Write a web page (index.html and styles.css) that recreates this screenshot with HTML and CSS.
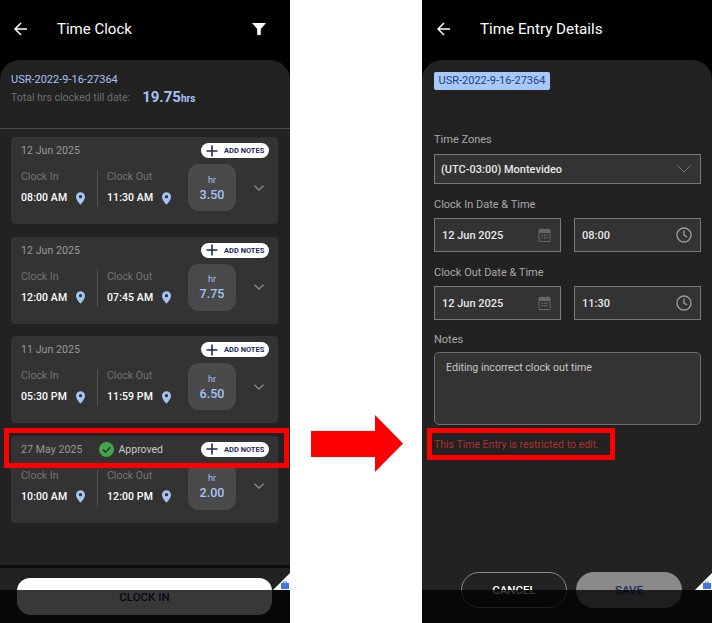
FILE: index.html
```html
<!DOCTYPE html>
<html lang="en">
<head>
    <meta charset="UTF-8">
    <meta name="viewport" content="width=device-width, initial-scale=1.0">
    <title>Time Clock</title>
    <link rel="stylesheet" href="styles.css">
</head>
<body>
    <svg width="0" height="0" class="defs">
        <symbol id="pin" viewBox="0 0 10 14"><path fill="#a4c4f4" fill-rule="evenodd" d="M5 0a5 5 0 0 1 5 5c0 3.400-3.400 6.800-5 9-1.600-2.200-5-5.600-5-9a5 5 0 0 1 5-5zm0 3.200a1.800 1.800 0 1 0 0 3.600 1.800 1.800 0 0 0 0-3.600z"/></symbol>
        <symbol id="chev" viewBox="0 0 10 6"><path fill="none" stroke="#8a8a8a" stroke-width="1.300" d="M.5.700 5 5l4.500-4.300"/></symbol>
        <symbol id="plus" viewBox="0 0 12 12"><path stroke="#1b2a5c" stroke-width="1.600" d="M6 .5v11M.5 6h11"/></symbol>
        <symbol id="cal" viewBox="0 0 14 14"><path fill="#666" fill-rule="evenodd" d="M2 1h2V0h1v1h4V0h1v1h2a1 1 0 0 1 1 1v11a1 1 0 0 1-1 1H2a1 1 0 0 1-1-1V2a1 1 0 0 1 1-1zm0 4v8h10V5zm2 1.500h1.500V8H4zm2.300 0h1.500V8H6.300zm2.300 0H10V8H8.600zM4 9h1.500v1.500H4zm2.300 0h1.500v1.500H6.300zm2.300 0H10v1.500H8.600z" transform="translate(-.5)"/></symbol>
        <symbol id="clock" viewBox="0 0 16 16"><circle cx="8" cy="8" r="7" fill="none" stroke="#9a9a9a" stroke-width="1.400"/><path fill="none" stroke="#9a9a9a" stroke-width="1.400" d="M8 3.500V8l3.200 2"/></symbol>
        <symbol id="case" viewBox="0 0 8 8"><path fill="#3f78e0" d="M0 2h2.200V.5h3.600V2H8v6H0zM3 2h2V1.200H3z"/></symbol>
    </svg>

    <!-- Time Clock list -->
    <div class="screen">
        <header class="topbar">
            <svg class="back" width="14" height="14" viewBox="0 0 14 14"><path fill="none" stroke="#fff" stroke-width="1.500" d="M13 7H1.500M7 1 1 7l6 6"/></svg>
            <span class="title">Time Clock</span>
            <svg class="filter" width="14" height="12" viewBox="0 0 14 12"><path fill="#fff" d="M0 0h14L8.800 6v6H5.200V6z"/></svg>
        </header>
        <main class="panel">
            <div class="summary">
                <div class="usr">USR-2022-9-16-27364</div>
                <div class="total">
                    <span class="total-label">Total hrs clocked till date:</span>
                    <span class="total-value">19.75<small>hrs</small></span>
                </div>
            </div>
            <div class="cards">
                <div class="card">
                    <div class="card-top">
                        <span class="date">12 Jun 2025</span>
                        <span class="notes-btn"><svg width="12" height="12"><use href="#plus"/></svg>ADD NOTES</span>
                    </div>
                    <div class="card-body">
                        <div class="col"><div class="lbl">Clock In</div><div class="val">08:00 AM<svg width="9" height="13"><use href="#pin"/></svg></div></div>
                        <div class="col col-out"><div class="lbl">Clock Out</div><div class="val">11:30 AM<svg width="9" height="13"><use href="#pin"/></svg></div></div>
                        <div class="hours"><span>hr</span><b>3.50</b></div>
                        <svg class="chev" width="10" height="6"><use href="#chev"/></svg>
                    </div>
                </div>
                <div class="card">
                    <div class="card-top">
                        <span class="date">12 Jun 2025</span>
                        <span class="notes-btn"><svg width="12" height="12"><use href="#plus"/></svg>ADD NOTES</span>
                    </div>
                    <div class="card-body">
                        <div class="col"><div class="lbl">Clock In</div><div class="val">12:00 AM<svg width="9" height="13"><use href="#pin"/></svg></div></div>
                        <div class="col col-out"><div class="lbl">Clock Out</div><div class="val">07:45 AM<svg width="9" height="13"><use href="#pin"/></svg></div></div>
                        <div class="hours"><span>hr</span><b>7.75</b></div>
                        <svg class="chev" width="10" height="6"><use href="#chev"/></svg>
                    </div>
                </div>
                <div class="card">
                    <div class="card-top">
                        <span class="date">11 Jun 2025</span>
                        <span class="notes-btn"><svg width="12" height="12"><use href="#plus"/></svg>ADD NOTES</span>
                    </div>
                    <div class="card-body">
                        <div class="col"><div class="lbl">Clock In</div><div class="val">05:30 PM<svg width="9" height="13"><use href="#pin"/></svg></div></div>
                        <div class="col col-out"><div class="lbl">Clock Out</div><div class="val">11:59 PM<svg width="9" height="13"><use href="#pin"/></svg></div></div>
                        <div class="hours"><span>hr</span><b>6.50</b></div>
                        <svg class="chev" width="10" height="6"><use href="#chev"/></svg>
                    </div>
                </div>
                <div class="card">
                    <div class="card-top">
                        <span class="date">27 May 2025</span>
                        <span class="approved">
                            <svg width="15" height="15" viewBox="0 0 15 15"><circle cx="7.500" cy="7.500" r="7.500" fill="#43a548"/><path fill="none" stroke="#1d3a1f" stroke-width="1.500" d="m3.800 7.600 2.700 2.700 4.800-5"/></svg>
                            Approved
                        </span>
                        <span class="notes-btn"><svg width="12" height="12"><use href="#plus"/></svg>ADD NOTES</span>
                    </div>
                    <div class="card-body">
                        <div class="col"><div class="lbl">Clock In</div><div class="val">10:00 AM<svg width="9" height="13"><use href="#pin"/></svg></div></div>
                        <div class="col col-out"><div class="lbl">Clock Out</div><div class="val">12:00 PM<svg width="9" height="13"><use href="#pin"/></svg></div></div>
                        <div class="hours"><span>hr</span><b>2.00</b></div>
                        <svg class="chev" width="10" height="6"><use href="#chev"/></svg>
                    </div>
                </div>
            </div>
        </main>
        <footer class="footer">
            <div class="clock-btn">CLOCK IN</div>
        </footer>
        <div class="corner"></div>
        <svg class="case" width="8" height="8"><use href="#case"/></svg>
        <div class="navbar"></div>
        <div class="mark mark-card"></div>
    </div>

    <div class="between">
        <svg width="92" height="57" viewBox="0 0 92 57"><path fill="#f00" d="M0 16h64V0l28 28.500L64 57V42H0z"/></svg>
    </div>

    <!-- Time Entry Details -->
    <div class="screen">
        <header class="topbar">
            <svg class="back" width="14" height="14" viewBox="0 0 14 14"><path fill="none" stroke="#fff" stroke-width="1.500" d="M13 7H1.500M7 1 1 7l6 6"/></svg>
            <span class="title title-detail">Time Entry Details</span>
        </header>
        <main class="panel panel-detail">
            <div class="chip">USR-2022-9-16-27364</div>
            <div class="field-label label-first">Time Zones</div>
            <div class="box select"><span>(UTC-03:00) Montevideo</span><svg width="14" height="8" viewBox="0 0 14 8"><path fill="none" stroke="#777" stroke-width="1" d="M.5.500 7 7l6.500-6.500"/></svg></div>
            <div class="field-label">Clock In Date &amp; Time</div>
            <div class="pair">
                <div class="box"><span>12 Jun 2025</span><svg width="14" height="14"><use href="#cal"/></svg></div>
                <div class="box"><span>08:00</span><svg width="16" height="16"><use href="#clock"/></svg></div>
            </div>
            <div class="field-label">Clock Out Date &amp; Time</div>
            <div class="pair">
                <div class="box"><span>12 Jun 2025</span><svg width="14" height="14"><use href="#cal"/></svg></div>
                <div class="box"><span>11:30</span><svg width="16" height="16"><use href="#clock"/></svg></div>
            </div>
            <div class="field-label label-notes">Notes</div>
            <div class="notes-area">Editing incorrect clock out time</div>
            <div class="error">This Time Entry is restricted to edit.</div>
            <div class="actions">
                <div class="action cancel">CANCEL</div>
                <div class="action save">SAVE</div>
            </div>
        </main>
        <div class="corner"></div>
        <svg class="case" width="8" height="8"><use href="#case"/></svg>
        <div class="navbar"></div>
        <div class="mark mark-error"></div>
    </div>
</body>
</html>
```

FILE: styles.css
```css
body {
    margin: 0;
    width: 712px;
    height: 623px;
    display: flex;
    overflow: hidden;
    background: #fff;
    font-family: Roboto, "Liberation Sans", sans-serif;
}
.defs {
    position: absolute;
}
.screen {
    position: relative;
    width: 290px;
    height: 623px;
    display: flex;
    flex-direction: column;
    background: #000;
    overflow: hidden;
}
.between {
    width: 132px;
    padding: 415px 0 0 21px;
    box-sizing: border-box;
}
.topbar {
    height: 60px;
    flex: none;
    display: flex;
    align-items: center;
    padding: 0 24px 2px 14px;
    box-sizing: border-box;
    color: #fff;
}
.title {
    margin-left: 29px;
    font-size: 15px;
    flex: 1;
}
.title-detail {
    margin-left: 29px;
    font-size: 15.200px;
}
.screen:last-child .back {
    margin-left: 1px;
}

/* Left panel */
.panel {
    height: 505px;
    flex: none;
    background: #222;
    border-radius: 20px 20px 0 0;
    box-sizing: border-box;
}
.summary {
    height: 69px;
    padding: 13px 11px 0;
    box-sizing: border-box;
    border-bottom: 1px solid #4a4a4a;
}
.usr {
    font-size: 11px;
    line-height: 14px;
    color: #a4c4f4;
}
.total {
    display: flex;
    align-items: center;
    height: 20px;
}
.total-label {
    font-size: 10.500px;
    color: #6f6f6f;
}
.total-value {
    margin-left: 12px;
    font-size: 15px;
    font-weight: 700;
    color: #a4c4f4;
}
.total-value small {
    font-size: 10px;
}
.cards {
    padding: 8px 12px 0 11px;
    display: flex;
    flex-direction: column;
    gap: 12.500px;
}
.card {
    height: 87px;
    background: #333;
    border-radius: 4px;
    padding: 6px 9px 0 10px;
    box-sizing: border-box;
}
.card-top {
    height: 15px;
    display: flex;
    align-items: center;
}
.date {
    font-size: 10.500px;
    letter-spacing: 0.1px;
    color: #9a9a9a;
    flex: none;
}
.approved {
    display: flex;
    align-items: center;
    gap: 5px;
    margin-left: 16px;
    font-size: 10.500px;
    color: #c8c8c8;
}
.notes-btn {
    margin-left: auto;
    width: 68px;
    height: 15px;
    background: #fff;
    border-radius: 8px;
    display: flex;
    align-items: center;
    gap: 6px;
    padding-left: 5px;
    box-sizing: border-box;
    font-size: 7.500px;
    font-weight: 700;
    color: #1b2a5c;
    white-space: nowrap;
}
.card-body {
    display: flex;
    align-items: center;
    margin-top: 6px;
    height: 47px;
}
.col {
    width: 76px;
    height: 37px;
    flex: none;
    margin-top: 2px;
}
.col-out {
    width: 91px;
    border-left: 1px solid #555;
    padding-left: 9px;
    box-sizing: border-box;
}
.lbl {
    font-size: 10.500px;
    line-height: 13px;
    color: #747474;
    margin-bottom: 8px;
}
.val {
    display: flex;
    align-items: center;
    gap: 9px;
    font-size: 10.500px;
    letter-spacing: 0.1px;
    line-height: 14px;
    font-weight: 500;
    color: #fff;
}
.hours {
    width: 48px;
    height: 47px;
    flex: none;
    border-radius: 11px;
    background: #4a4a4a;
    display: flex;
    flex-direction: column;
    align-items: center;
    justify-content: center;
    padding-bottom: 2px;
    box-sizing: border-box;
    color: #a4c4f4;
}
.hours span {
    font-size: 9px;
    line-height: 15px;
}
.hours b {
    font-size: 12.500px;
    line-height: 13px;
    font-weight: 500;
}
.chev {
    margin-left: 18px;
}
.footer {
    flex: 1;
    background: #222;
    border-top: 3px solid #0c0c0c;
}
.clock-btn {
    width: 255px;
    height: 37px;
    margin: 10px 0 0 17px;
    border-radius: 13px 13px 14px 14px;
    background: #fff;
    color: #1b2a5c;
    font-size: 11.500px;
    font-weight: 500;
    text-align: center;
    padding-top: 12px;
    box-sizing: border-box;
}

/* Bits that lie over the app */
.navbar {
    position: absolute;
    left: 0;
    right: 0;
    top: 590px;
    bottom: 0;
    background: rgba(0, 0, 0, 0.78);
}
.corner {
    position: absolute;
    right: 0;
    top: 573px;
    width: 17px;
    height: 17px;
    background: #fff;
    clip-path: polygon(100% 0, 100% 100%, 0 100%);
}
.case {
    position: absolute;
    right: 1px;
    top: 581px;
}
.mark {
    position: absolute;
    border: 5px solid #f00;
    box-sizing: border-box;
}
.mark-card {
    left: 4px;
    top: 428px;
    width: 285px;
    height: 40px;
}
.mark-error {
    left: 5px;
    top: 428px;
    width: 188px;
    height: 32px;
}

/* Right panel */
.panel-detail {
    height: 563px;
    padding: 12px 11px 0 12px;
    position: relative;
}
.chip {
    width: 116px;
    height: 18px;
    background: #a8c8fa;
    border-radius: 2px;
    color: #243f80;
    font-size: 11px;
    line-height: 18px;
    text-align: center;
}
.field-label {
    height: 14px;
    line-height: 14px;
    font-size: 11px;
    color: #a8a8a8;
    margin: 14px 0 6px;
}
.label-first {
    margin: 43px 0 7px;
}
.label-notes {
    margin: 13px 0 5px;
}
.box {
    height: 34px;
    flex: 1;
    background: #333;
    border: 1px solid #7a7a7a;
    display: flex;
    align-items: center;
    justify-content: space-between;
    padding: 0 8px 0 7px;
    box-sizing: border-box;
    font-size: 11px;
    font-weight: 500;
    color: #e8e8e8;
}
.select {
    height: 30px;
    flex: none;
    padding: 0 9px 0 6px;
}
.pair {
    display: flex;
    gap: 13px;
}
.notes-area {
    height: 73px;
    background: #333;
    border: 1px solid #6e6e6e;
    border-radius: 5px;
    padding: 8px 11px;
    box-sizing: border-box;
    font-size: 10.600px;
    line-height: 14px;
    color: #c8c8c8;
}
.error {
    margin-top: 13px;
    font-size: 10.500px;
    line-height: 14px;
    color: #b03030;
}
.actions {
    display: flex;
    gap: 9px;
    margin: 120px 0 0 27px;
}
.action {
    width: 106px;
    height: 36px;
    border-radius: 18px;
    box-sizing: border-box;
    text-align: center;
    line-height: 37px;
    font-size: 11.500px;
    font-weight: 500;
}
.cancel {
    border: 1px solid #8a8a8a;
    color: #fff;
    line-height: 35px;
}
.save {
    background: #8a8a8a;
    color: #1b2a5c;
}
```
